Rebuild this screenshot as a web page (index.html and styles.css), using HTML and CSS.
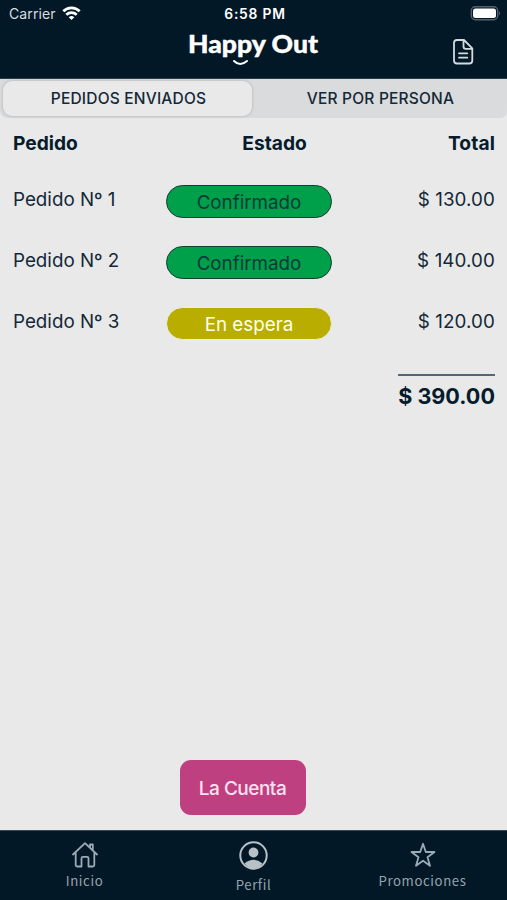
FILE: index.html
```html
<!DOCTYPE html>
<html lang="es">
<head>
<meta charset="utf-8">
<title>Happy Out</title>
<link rel="stylesheet" href="styles.css">
</head>
<body>
<div class="app">
  <header class="header">
    <div class="status">
      <div class="carrier"><span>Carrier</span>
        <svg width="19" height="15" viewBox="0 0 19 15" fill="none" stroke="#fff" stroke-width="2.7"><path d="M1.3 5.3C5.9.7 13.1.7 17.7 5.3M4.3 8.7C7.3 5.9 11.7 5.9 14.7 8.7"/><path d="M6.7 11.2Q9.5 8.9 12.3 11.2L9.5 14Z" fill="#fff" stroke="none"/></svg>
      </div>
      <span class="clock">6:58 PM</span>
      <svg class="battery" width="31" height="15" viewBox="0 0 31 15"><rect x="1.3" y=".8" width="26.4" height="13" rx="4" fill="none" stroke="#54616d" stroke-width="1.4"/><rect x="3" y="2.5" width="23" height="9.6" rx="2.5" fill="#fff"/><path d="M29 5Q31 7.3 29 9.6Z" fill="#54616d"/></svg>
    </div>
    <div class="brandbar">
      <svg class="logo" width="132" height="36" viewBox="0 0 132 36"><text class="wordmark" x="0" y="21.5" textLength="130" lengthAdjust="spacingAndGlyphs">Happy Out</text><path d="M46 30Q52 36 59 30" fill="none" stroke="#fff" stroke-width="2" stroke-linecap="round"/></svg>
      <svg class="doc" width="21" height="26" viewBox="0 0 21 26" fill="none" stroke="#d3dae0" stroke-width="1.8" stroke-linecap="round" stroke-linejoin="round"><path d="M4 1H11L19.3 9.3V21.5Q19.3 24.5 16.3 24.5H4Q1 24.5 1 21.5V4Q1 1 4 1ZM10.5 1V7.5Q10.5 9.8 12.8 9.8H19M6 14.3H14.3M6 18.7H14.3"/></svg>
    </div>
  </header>
  <nav class="tabs"><div class="tab active"><span>PEDIDOS ENVIADOS</span></div><div class="tab"><span>VER POR PERSONA</span></div></nav>
  <main class="orders">
    <div class="row head"><span>Pedido</span><span class="state">Estado</span><span class="price">Total</span></div>
    <div class="row"><span>Pedido Nº 1</span><span class="pill">Confirmado</span><span class="price">$ 130.00</span></div>
    <div class="row"><span>Pedido Nº 2</span><span class="pill">Confirmado</span><span class="price">$ 140.00</span></div>
    <div class="row"><span>Pedido Nº 3</span><span class="pill waiting">En espera</span><span class="price">$ 120.00</span></div>
    <div class="total">$ 390.00</div>
    <button class="bill">La Cuenta</button>
  </main>
  <footer class="nav">
    <div class="item"><svg width="26" height="26" viewBox="0 0 26 26" fill="none" stroke="#9caab5" stroke-width="1.8" stroke-linecap="round" stroke-linejoin="round"><path d="M1 12.5 13 1.2 25 12.5M18 5.8V2.5H20.8V8.5M3.7 10.3V23Q3.7 24.5 5.2 24.5H9.5V16.2Q9.5 14.8 11 14.8H15Q16.5 14.8 16.5 16.2V24.5H20.8Q22.3 24.5 22.3 23V10.3"/></svg><span>Inicio</span></div>
    <div class="item profile"><svg width="29" height="29" viewBox="0 0 29 29"><circle cx="14.5" cy="14.5" r="13.2" fill="none" stroke="#b8c0c8" stroke-width="2"/><circle cx="14.5" cy="11.5" r="4.9" fill="#b8c0c8"/><path d="M5.5 22.5Q14.5 15 23.5 22.5Q20 27.5 14.5 27.5Q9 27.5 5.5 22.5Z" fill="#b8c0c8"/></svg><span>Perfil</span></div>
    <div class="item"><svg width="26" height="26" viewBox="0 0 26 26" fill="none" stroke="#9caab5" stroke-width="1.8" stroke-linejoin="round"><path d="M13 1.8 15.8 10H24.5L17.5 15.2 20 23.8 13 18.7 6 23.8 8.5 15.2 1.5 10H10.2Z"/></svg><span>Promociones</span></div>
  </footer>
</div>
</body>
</html>
```
FILE: styles.css
```css
* { box-sizing: border-box; }
body { margin: 0; background: #e9e9e9; color: #142838; font-family: Inter, sans-serif; }
.app { width: 507px; height: 900px; display: flex; flex-direction: column; overflow: hidden; }
.header { height: 79px; background: #021827; color: #fff; border-bottom: 1px solid #233b4a; }
.status { height: 28px; padding: 0 6px 1px 9px; display: grid; grid-template-columns: 1fr auto 1fr; align-items: center; font-size: 14px; }
.carrier { display: flex; align-items: center; gap: 6px; color: #d8dde1; letter-spacing: .1px; }
.clock { font-weight: 600; font-size: 13.8px; letter-spacing: .8px; }
.battery { justify-self: end; }
.brandbar { display: grid; grid-template-columns: 1fr 132px 1fr; align-items: start; padding-top: 3px; }
.logo { grid-column: 2; overflow: visible; }
.wordmark { font: 900 24.5px Lato, sans-serif; fill: #fff; stroke: #fff; stroke-width: .4px; }
.doc { justify-self: end; margin: 8px 33px 0 0; }
.tabs { height: 39px; display: flex; background: #d9dbdd; border-radius: 0 0 7px 7px; padding: 2px 0 2px 3px; }
.tab { flex: 1; display: flex; align-items: center; justify-content: center; font-size: 15.5px; font-weight: 500; letter-spacing: .2px; padding-left: 2px; }
.tab.active { flex: 0 0 249px; background: #e9e9e9; border-radius: 9px; box-shadow: 0 0 3px #aaa; }
.orders { flex: 1; display: flex; flex-direction: column; padding: 0 12px 0 13px; }
.row { height: 61px; display: grid; grid-template-columns: 153px 166px 1fr; align-items: center; font-size: 18.8px; }
.row.head { height: 51px; padding-bottom: 2px; font-size: 19.2px; font-weight: 700; color: #061b2b; }
.state { text-align: center; padding-left: 51px; }
.price { text-align: right; letter-spacing: .1px; }
.pill { height: 33px; margin-top: 4px; display: flex; align-items: center; justify-content: center; border: 1.5px solid #143d39; border-radius: 17px; background: #009f49; color: #08393a; padding-top: 1px; }
.waiting { background: #b9ad00; border-color: #eeeddf; color: #fffff0; }
.total { align-self: flex-end; width: 97px; margin-top: 22px; padding-top: 6px; border-top: 2px solid #52677a; font-size: 21.6px; line-height: 28px; font-weight: 700; color: #061b2b; text-align: right; white-space: nowrap; }
.bill { align-self: center; width: 126px; height: 55px; margin: auto 23px 15px 0; border: 0; border-radius: 11px; background: #bf4080; color: #ffe0f1; font: 500 19px Inter, sans-serif; letter-spacing: -.5px; padding: 1px 0 0; }
.nav { height: 70px; display: grid; grid-template-columns: repeat(3, 1fr); background: #021827; border-top: 1px solid #30495a; color: #95a3ae; font: 13.2px/18px "Noto Sans CJK SC", sans-serif; letter-spacing: .6px; }
.item { display: flex; flex-direction: column; align-items: center; gap: 4px; padding-top: 11px; }
.profile { padding-top: 10px; gap: 6px; }
```
